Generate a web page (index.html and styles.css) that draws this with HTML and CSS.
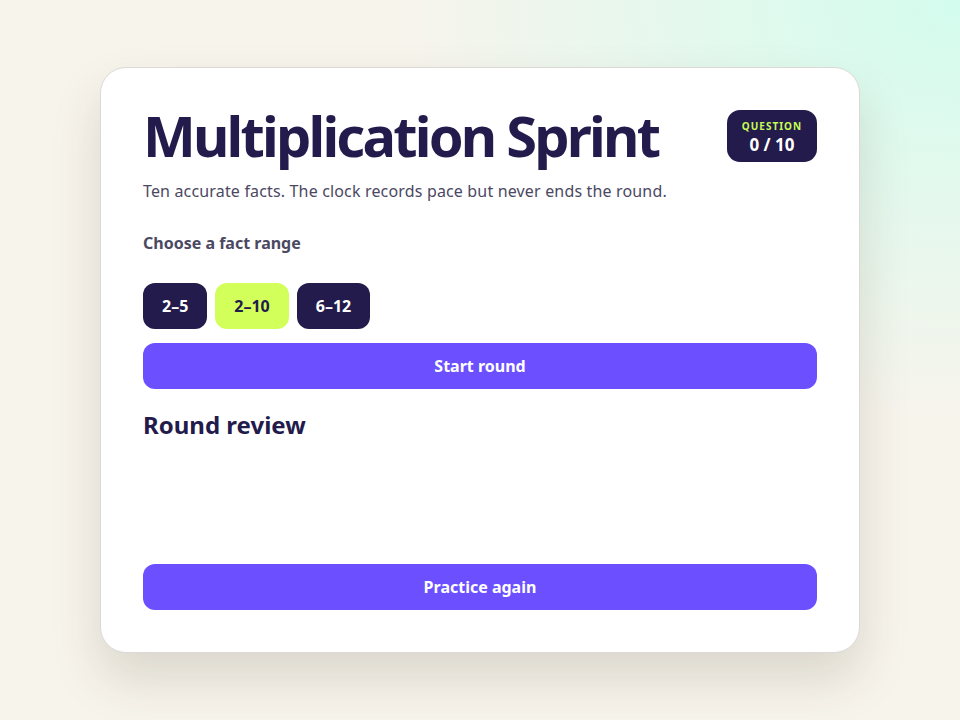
FILE: index.html
```html
<!DOCTYPE html>
<html lang="en">
  <head>
    <meta charset="UTF-8" />
    <title>Multiplication Sprint</title>
    <link rel="stylesheet" href="styles.css">
  </head>

  <body>
    <main class="card">
      <header class="head">
        <div class="intro">
          <h1 class="title">Multiplication Sprint</h1>
          <p class="lead">Ten accurate facts. The clock records pace but never ends the round.</p>
        </div>
        <div class="badge">
          <span class="badge-label">QUESTION</span>
          <span class="badge-count">0 / 10</span>
        </div>
      </header>

      <section class="setup">
        <h2 class="label">Choose a fact range</h2>
        <div class="ranges">
          <button class="range">2–5</button>
          <button class="range active">2–10</button>
          <button class="range">6–12</button>
        </div>
        <button class="primary">Start round</button>
      </section>

      <section class="review">
        <h2 class="review-title">Round review</h2>
        <ul class="review-list"></ul>
        <button class="primary">Practice again</button>
      </section>
    </main>
  </body>
</html>
```

FILE: styles.css
```css
* {
  padding: 0;
  margin: 0;
  box-sizing: border-box;
}

html,
body {
  height: 100%;
}

body {
  font-family: "Noto Sans", "Open Sans", sans-serif;
  color: #221b4b;
  background:
    radial-gradient(ellipse 560px 420px at 100% 0%, #d3fcee 0%, rgba(211, 252, 238, 0) 100%),
    #f7f4ec;
  overflow: hidden;
}

.card {
  width: 760px;
  margin: 67px auto 0;
  padding: 42px;
  background: #fff;
  border: 1px solid #dcdad6;
  border-radius: 26px;
  box-shadow: 0 26px 50px rgba(60, 50, 30, 0.15);
}

.head {
  display: flex;
  justify-content: space-between;
  align-items: flex-start;
}

.title {
  font-size: 56px;
  line-height: 50px;
  font-weight: 700;
  letter-spacing: -0.05em;
  color: #221b4b;
}

.lead {
  margin-top: 20px;
  font-size: 16px;
  letter-spacing: 0.01em;
  color: #4b4862;
}

.badge {
  display: flex;
  flex-direction: column;
  align-items: center;
  justify-content: center;
  width: 90px;
  height: 52px;
  padding-top: 2px;
  border-radius: 13px;
  background: #221b4b;
}

.badge-label {
  font-size: 10px;
  font-weight: 700;
  letter-spacing: 0.1em;
  color: #c8fb54;
}

.badge-count {
  font-size: 17px;
  font-weight: 700;
  color: #fff;
}

.setup {
  margin-top: 30px;
}

.label {
  font-size: 16px;
  font-weight: 700;
  color: #4b4862;
}

.ranges {
  display: flex;
  gap: 8px;
  margin-top: 29px;
}

.range {
  height: 46px;
  padding: 0 19px;
  border: none;
  border-radius: 12px;
  font-family: inherit;
  font-size: 16px;
  font-weight: 700;
  color: #fff;
  background: #221b4b;
}

.range.active {
  color: #221b4b;
  background: #d2ff5a;
}

.primary {
  display: block;
  width: 100%;
  height: 46px;
  margin-top: 14px;
  border: none;
  border-radius: 12px;
  font-family: inherit;
  font-size: 16px;
  font-weight: 700;
  color: #fff;
  background: #6c4fff;
}

.review {
  margin-top: 20px;
}

.review-title {
  font-size: 24px;
  line-height: 32px;
  font-weight: 700;
  color: #221b4b;
}

.review-list {
  list-style: none;
  min-height: 109px;
}
```
